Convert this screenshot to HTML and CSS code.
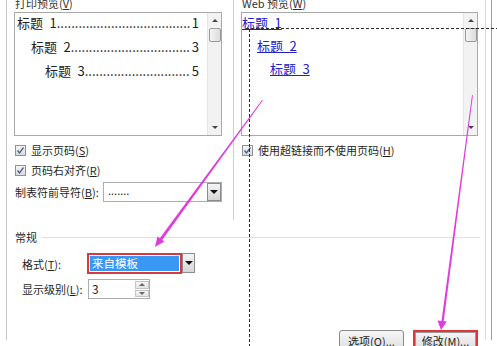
FILE: index.html
```html
<!DOCTYPE html>
<html>
<head>
<meta charset="utf-8">
<link rel="stylesheet" href="styles.css">
</head>
<body>
<div class="frame">
  <div class="win">
    <div class="top">
      <div class="col left">
        <div class="cap">打印预览(<u>V</u>)</div>
        <div class="box">
          <div class="list">
            <div class="toc"><span>标题&ensp;1</span><span class="dots">.....................................</span><span class="num">1</span></div>
            <div class="toc l2"><span>标题&ensp;2</span><span class="dots">.................................</span><span class="num">3</span></div>
            <div class="toc l3"><span>标题&ensp;3</span><span class="dots">.............................</span><span class="num">5</span></div>
          </div>
          <div class="vscroll">
            <span class="arr"><span class="tri up"></span></span>
            <span class="thumb"></span>
            <span class="track"></span>
            <span class="arr"><span class="tri down"></span></span>
          </div>
        </div>
        <div class="chk first"><span class="cb"><svg width="9" height="9" viewBox="0 0 9 9"><path d="M1.5 4.5 L3.5 7 L7.5 1.5" fill="none" stroke="#4b5f8f" stroke-width="1.3"/></svg></span><span>显示页码(<u>S</u>)</span></div>
        <div class="chk"><span class="cb"><svg width="9" height="9" viewBox="0 0 9 9"><path d="M1.5 4.5 L3.5 7 L7.5 1.5" fill="none" stroke="#4b5f8f" stroke-width="1.3"/></svg></span><span>页码右对齐(<u>R</u>)</span></div>
        <div class="field">
          <span class="flabel">制表符前导符(<u>B</u>):</span>
          <div class="select"><span class="val">.......</span><span class="dbtn"><span class="tri down big"></span></span></div>
        </div>
      </div>
      <div class="col right">
        <div class="cap">Web 预览(<u>W</u>)</div>
        <div class="box">
          <div class="list web">
            <div class="link"><a>标题&ensp;1</a></div>
            <div class="link l2w"><a>标题&ensp;2</a></div>
            <div class="link l3w"><a>标题&ensp;3</a></div>
          </div>
          <div class="vscroll">
            <span class="arr"><span class="tri up"></span></span>
            <span class="thumb"></span>
            <span class="track"></span>
            <span class="arr"><span class="tri down"></span></span>
          </div>
        </div>
        <div class="chk first"><span class="cb"><svg width="9" height="9" viewBox="0 0 9 9"><path d="M1.5 4.5 L3.5 7 L7.5 1.5" fill="none" stroke="#4b5f8f" stroke-width="1.3"/></svg></span><span>使用超链接而不使用页码(<u>H</u>)</span></div>
      </div>
    </div>
    <div class="ghead"><span>常规</span><span class="gline"></span></div>
    <div class="frow first">
      <span class="rlabel">格式(<u>T</u>):</span>
      <div class="combo">
        <div class="red"><div class="hl">来自模板</div></div>
        <span class="dbtn cbtn"><span class="tri down big"></span></span>
      </div>
    </div>
    <div class="frow">
      <span class="rlabel">显示级别(<u>L</u>):</span>
      <div class="spin">
        <span class="val">3</span>
        <span class="sbtns"><span class="sb"><span class="tri up"></span></span><span class="sb"><span class="tri down"></span></span></span>
      </div>
    </div>
    <div class="buttons">
      <div class="ubtn">选项(<u>O</u>)...</div>
      <div class="ubtn hot">修改(<u>M</u>)...</div>
    </div>
  </div>
</div>
<svg class="overlay" width="497" height="346" viewBox="0 0 497 346">
  <line x1="246" y1="28.5" x2="497" y2="28.5" stroke="#2a2a2a" stroke-width="1" stroke-dasharray="3 2"/>
  <line x1="249.5" y1="29" x2="249.5" y2="346" stroke="#2a2a2a" stroke-width="1" stroke-dasharray="3 2"/>
  <polygon points="262,100 262.8,100.6 161.8,240.6 159.4,238.8" fill="#df3bdf"/>
  <polygon points="155,247 164.4,241.4 157.4,236.4" fill="#df3bdf"/>
  <polygon points="472,95 472.9,95.2 443.6,322 441.4,321.7" fill="#df3bdf"/>
  <polygon points="441,330 446.8,321.5 437.5,320.4" fill="#df3bdf"/>
</svg>
</body>
</html>
```
FILE: styles.css
```css
* { box-sizing: border-box; }
html, body { margin: 0; padding: 0; }
body {
  width: 497px;
  height: 346px;
  overflow: hidden;
  position: relative;
  background: #ffffff;
  font-family: "Noto Sans CJK SC", "Liberation Sans", sans-serif;
  font-size: 11px;
  color: #1f1f1f;
}
u { text-decoration: underline; }

.frame {
  margin-left: 6px;
  width: 486px;
  height: 346px;
  border-left: 1px solid #c6c6c6;
  border-right: 1px solid #9c9c9c;
}
.win {
  width: 479px;
  height: 346px;
  border-right: 1px solid #dadada;
  padding: 0 7px;
}

.top {
  display: flex;
  height: 226px;
  margin-top: -6px;
}
.left { width: 208px; margin-right: 11px; }
.right { width: 245px; border-left: 1px solid #cfcfcf; padding-left: 7px; }

.cap { height: 18px; line-height: 18px; white-space: nowrap; padding-left: 1px; color: #333; }

.box {
  height: 124px;
  border: 1px solid #a9a9a9;
  display: flex;
}
.list {
  flex: 1;
  min-width: 0;
  padding: 0 8px 0 2px;
  display: flex;
  flex-direction: column;
  gap: 4px;
  font-size: 13px;
}
.toc {
  display: flex;
  height: 20px;
  line-height: 20px;
  white-space: nowrap;
  color: #222;
}
.toc .dots { flex: 1; min-width: 0; overflow: hidden; }
.toc .num { margin-left: 2px; }
.l2 { padding-left: 14px; }
.l3 { padding-left: 28px; }

.list.web { padding: 0; gap: 4px; }
.link { height: 19px; line-height: 19px; white-space: nowrap; }
.link a { color: #2121c8; text-decoration: underline; }
.l2w { padding-left: 15px; }
.l3w { padding-left: 28px; }

.vscroll {
  width: 14px;
  background: #f2f2f2;
  border-left: 1px solid #e4e4e4;
  display: flex;
  flex-direction: column;
  align-items: center;
}
.arr { height: 15px; width: 100%; display: flex; align-items: center; justify-content: center; }
.thumb {
  width: 12px;
  height: 14px;
  border: 1px solid #9b9b9b;
  border-radius: 2px;
  background: linear-gradient(to right, #f4f4f4, #dcdcdc);
}
.track { flex: 1; }

.tri { width: 0; height: 0; border-left: 3px solid transparent; border-right: 3px solid transparent; }
.tri.up { border-bottom: 3px solid #444; }
.tri.down { border-top: 3px solid #444; }
.tri.big { border-left-width: 4px; border-right-width: 4px; border-top: 4px solid #111; }

.chk {
  display: flex;
  align-items: center;
  gap: 5px;
  height: 16px;
  margin-top: 4px;
  margin-left: 1px;
  white-space: nowrap;
}
.chk.first { margin-top: 6px; }
.cb {
  width: 11px;
  height: 11px;
  border: 1px solid #8f9196;
  background: linear-gradient(#f6f6f6, #dadada);
  display: flex;
  align-items: center;
  justify-content: center;
}

.field { display: flex; align-items: center; height: 20px; margin-top: 4px; }
.flabel { width: 89px; padding-left: 1px; white-space: nowrap; }
.select {
  width: 119px;
  height: 20px;
  border: 1px solid #abadb3;
  display: flex;
}
.select .val { flex: 1; padding-left: 4px; line-height: 14px; }
.dbtn {
  width: 14px;
  border: 1px solid #8c8c8c;
  background: linear-gradient(#f4f4f4, #d6d6d6);
  display: flex;
  align-items: center;
  justify-content: center;
}

.ghead {
  display: flex;
  align-items: center;
  height: 14px;
  margin-top: 10px;
  padding-left: 1px;
  margin-right: -2px;
}
.gline { flex: 1; border-top: 1px solid #dedede; margin-left: 5px; }

.frow {
  display: flex;
  align-items: center;
  height: 20px;
  margin-top: 5px;
  padding-left: 8px;
}
.frow.first { margin-top: 9px; height: 21px; }
.rlabel { width: 66px; white-space: nowrap; }

.combo { display: flex; height: 21px; margin-left: -1px; }
.red {
  width: 95px;
  height: 21px;
  border: 2px solid #e0353d;
  padding: 1px;
}
.hl {
  height: 100%;
  background: #3a98f5;
  color: #ffffff;
  font-size: 11.5px;
  line-height: 14px;
  padding-left: 2px;
}
.cbtn { width: 13px; height: 20px; }

.spin {
  width: 62px;
  height: 20px;
  border: 1px solid #abadb3;
  display: flex;
}
.spin .val { flex: 1; padding-left: 3px; line-height: 18px; font-size: 12px; }
.sbtns { width: 14px; display: flex; flex-direction: column; padding: 1px 0; gap: 1px; }
.sb {
  flex: 1;
  border: 1px solid #c4c4c4;
  background: linear-gradient(#f7f7f7, #e4e4e4);
  display: flex;
  align-items: center;
  justify-content: center;
}
.sb .tri.up { border-bottom-color: #666; }
.sb .tri.down { border-top-color: #666; }

.buttons {
  display: flex;
  justify-content: flex-end;
  gap: 9px;
  margin-top: 31px;
}
.ubtn {
  width: 65px;
  height: 23px;
  border: 1px solid #8a8a8a;
  border-radius: 3px;
  background: linear-gradient(#f6f6f6, #dcdcdc);
  text-align: center;
  line-height: 21px;
  white-space: nowrap;
}
.ubtn.hot {
  border: 2px solid #e0353d;
  border-radius: 0;
  box-shadow: inset 0 0 0 1px #9a9a9a;
  line-height: 19px;
}

.overlay { position: absolute; left: 0; top: 0; pointer-events: none; }
```
